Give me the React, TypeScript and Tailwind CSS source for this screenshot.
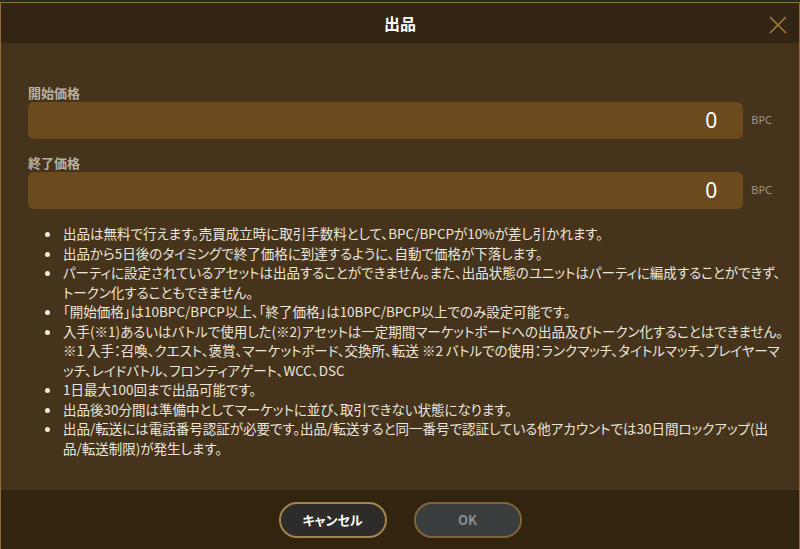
const notes: React.ReactNode[] = [
  "出品は無料で行えます。売買成立時に取引手数料として、BPC/BPCPが10%が差し引かれます。",
  "出品から5日後のタイミングで終了価格に到達するように、自動で価格が下落します。",
  <>
    パーティに設定されているアセットは出品することができません。また、出品状態のユニットはパーティに編成することができず、
    <br />
    トークン化することもできません。
  </>,
  "「開始価格」は10BPC/BPCP以上、「終了価格」は10BPC/BPCP以上でのみ設定可能です。",
  <>
    入手(※1)あるいはバトルで使用した(※2)アセットは一定期間マーケットボードへの出品及びトークン化することはできません。
    <br />
    ※1 入手：召喚、クエスト、褒賞、マーケットボード、交換所、転送 ※2 バトルでの使用：ランクマッチ、タイトルマッチ、プレイヤーマ
    <br />
    ッチ、レイドバトル、フロンティアゲート、WCC、DSC
  </>,
  "1日最大100回まで出品可能です。",
  "出品後30分間は準備中としてマーケットに並び、取引できない状態になります。",
  <>
    出品/転送には電話番号認証が必要です。出品/転送すると同一番号で認証している他アカウントでは30日間ロックアップ(出
    <br />
    品/転送制限)が発生します。
  </>,
];

function PriceField({ label }: { label: string }) {
  return (
    <div className="flex flex-col">
      <div className="h-[18px] text-[13px] leading-[18px] font-bold text-[#b8b0a3]">{label}</div>
      <div className="flex items-center">
        <div className="w-[716px] h-[37px] rounded-[6px] bg-[#6b4b1e] flex items-center justify-end pr-[26px] text-[21px] text-white font-['Noto_Sans',sans-serif]">
          0
        </div>
        <span className="ml-[8px] text-[11px] text-[#9d958a] font-['Noto_Sans',sans-serif]">BPC</span>
      </div>
    </div>
  );
}

export default function App() {
  return (
    <div className="w-[800px] h-[549px] flex flex-col bg-[#2a2925] font-['Noto_Sans_CJK_JP','Noto_Sans',sans-serif] [font-feature-settings:'palt']">
      <div className="h-[2px]" />
      <div className="flex-1 flex flex-col border-x border-t border-[#8f6c3b]">
        <div className="h-[40px] bg-[#332513] flex items-center justify-center relative">
          <span className="text-white font-bold text-[16px]">出品</span>
          <button className="absolute right-[12px] top-[13px]">
            <svg width="18" height="18" viewBox="0 0 18 18" fill="none" stroke="#a47b3e" strokeWidth="1.6">
              <line x1="1" y1="1" x2="17" y2="17" />
              <line x1="17" y1="1" x2="1" y2="17" />
            </svg>
          </button>
        </div>
        <div className="h-[447px] bg-[#45331c] pt-[41px] px-[27px] flex flex-col">
          <PriceField label="開始価格" />
          <div className="h-[15px]" />
          <PriceField label="終了価格" />
          <ul className="mt-[15px] pl-[34px] list-disc marker:text-[#f0ebe2] text-[13.5px] leading-[19.5px] text-[#ece6da] whitespace-nowrap">
            {notes.map((n, i) => (
              <li key={i} className="pl-[1px]">
                {n}
              </li>
            ))}
          </ul>
        </div>
        <div className="flex-1 bg-[#33240f] flex items-center justify-center gap-[27px]">
          <button className="w-[108px] h-[36px] rounded-full border-2 border-[#a3844f] bg-[#2d2c2a] text-white text-[13px] font-bold">
            キャンセル
          </button>
          <button className="w-[108px] h-[36px] rounded-full border-2 border-[#7d6540] bg-[#3a3d3e] text-[#8c8c8c] text-[13px] font-bold">
            OK
          </button>
        </div>
      </div>
    </div>
  );
}
